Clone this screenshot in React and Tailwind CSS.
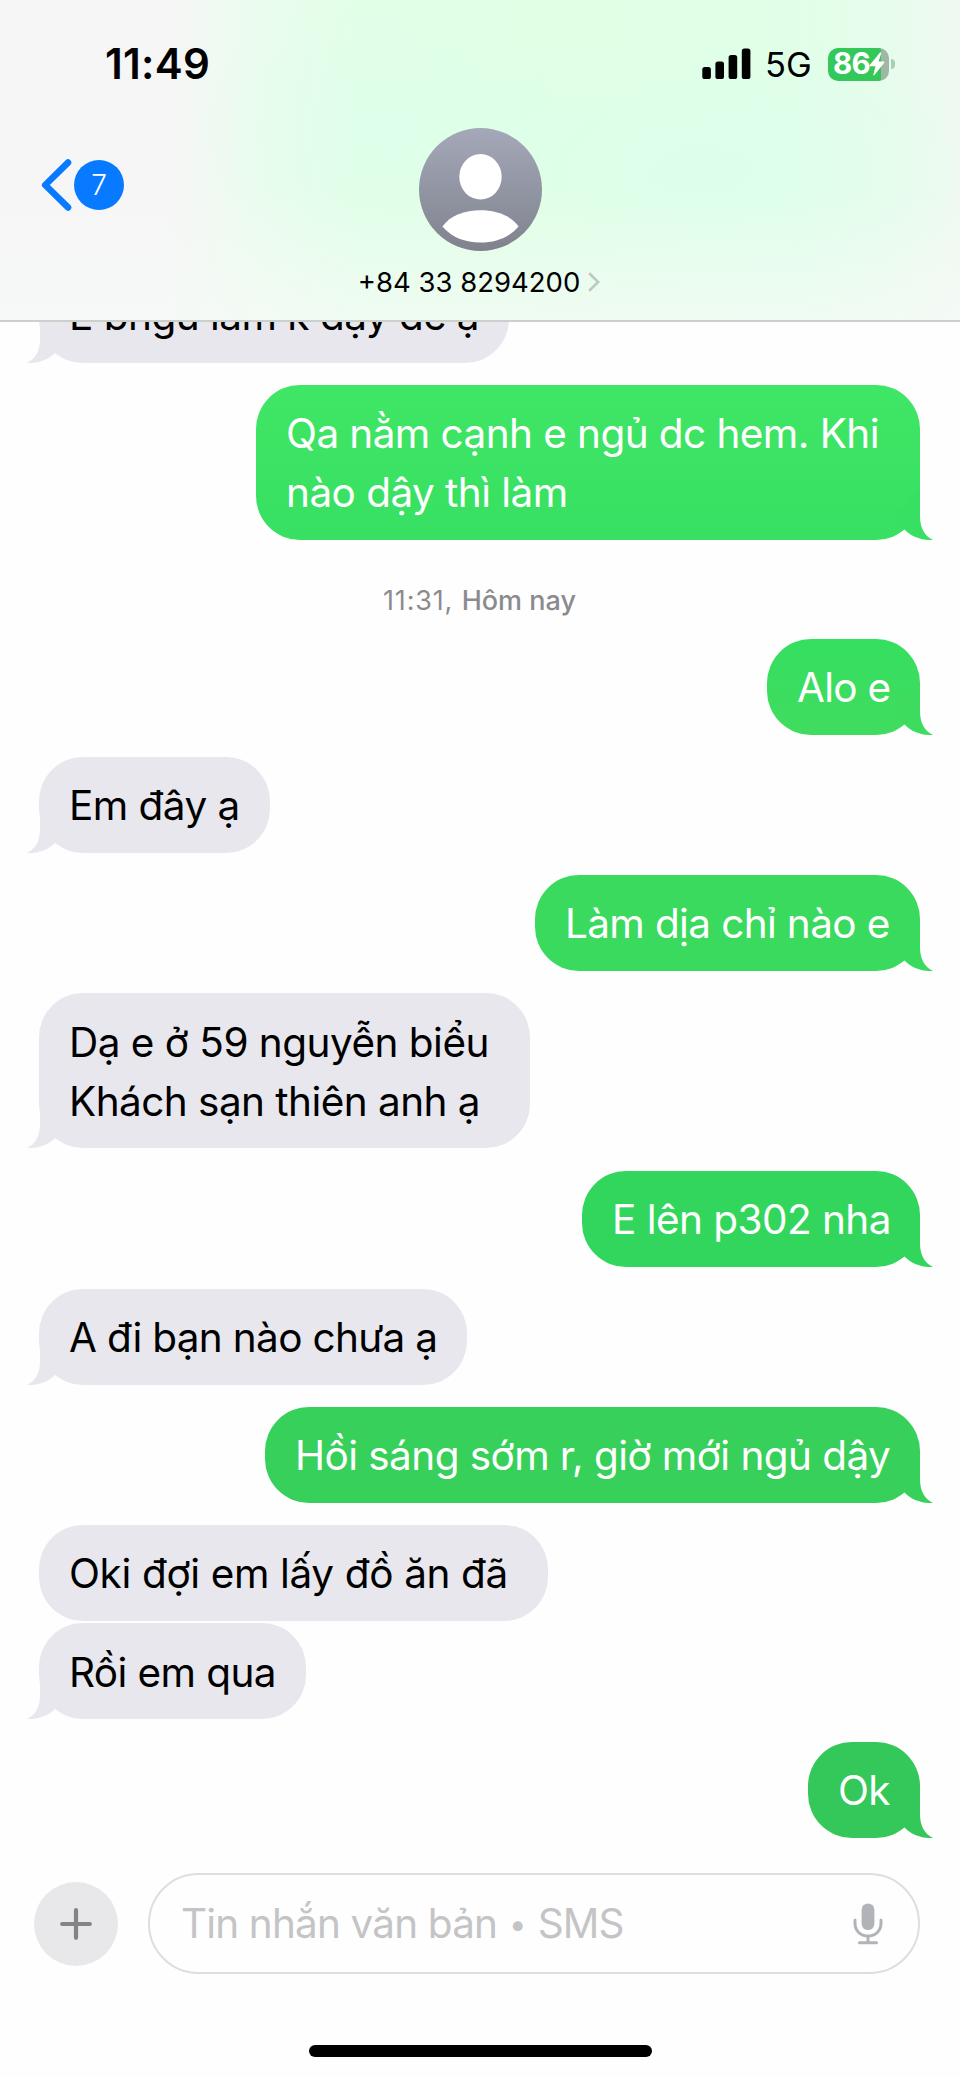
import React from 'react';
import clsx from 'clsx';

const messages = [
  { id: 1, from: 'them', lines: [{ text: 'E bhgủ làm k dậy dc ạ', spacing: 'tracking-[-0.52px]' }], size: 'w-[470px]', tail: true, first: true },
  {
    id: 2,
    from: 'me',
    lines: [
      { text: 'Qa nằm cạnh e ngủ dc hem. Khi', spacing: 'tracking-[-0.58px]' },
      { text: 'nào dậy thì làm', spacing: 'tracking-[-0.55px]' },
    ],
    size: 'w-[664px]',
    color: 'bg-gradient-to-b from-[#40e665] to-[#37e063]',
    tailColor: 'text-[#37e063]',
    tail: true,
  },
  { id: 3, stamp: true, time: '11:31,', day: 'Hôm nay' },
  { id: 4, from: 'me', lines: [{ text: 'Alo e', spacing: 'tracking-[-0.75px]' }], size: 'w-[153px]', color: 'bg-gradient-to-b from-[#35df60] to-[#40dc5f]', tailColor: 'text-[#3ddc5f]', tail: true },
  { id: 5, from: 'them', lines: [{ text: 'Em đây ạ', spacing: 'tracking-[-0.55px]' }], size: 'w-[231px]', tail: true },
  { id: 6, from: 'me', lines: [{ text: 'Làm dịa chỉ nào e', spacing: 'tracking-[-0.64px]' }], size: 'w-[385px]', color: 'bg-[#3ada5e]', tailColor: 'text-[#3ada5e]', tail: true },
  {
    id: 7,
    from: 'them',
    lines: [
      { text: 'Dạ e ở 59 nguyễn biểu', spacing: 'tracking-[-0.52px]' },
      { text: 'Khách sạn thiên anh ạ', spacing: 'tracking-[-0.55px]' },
    ],
    size: 'w-[491px]',
    tail: true,
  },
  { id: 8, from: 'me', lines: [{ text: 'E lên p302 nha', spacing: 'tracking-[-0.55px]' }], size: 'w-[338px]', color: 'bg-[#33d65c]', tailColor: 'text-[#33d65c]', tail: true },
  { id: 9, from: 'them', lines: [{ text: 'A đi bạn nào chưa ạ', spacing: 'tracking-[-0.68px]' }], size: 'w-[428px]', tail: true },
  { id: 10, from: 'me', lines: [{ text: 'Hồi sáng sớm r, giờ mới ngủ dậy', spacing: 'tracking-[-0.57px]' }], size: 'w-[655px]', color: 'bg-[#37d05a]', tailColor: 'text-[#37d05a]', tail: true },
  { id: 11, from: 'them', lines: [{ text: 'Oki đợi em lấy đồ ăn đã', spacing: 'tracking-[-0.36px]' }], size: 'w-[509px]' },
  { id: 12, from: 'them', lines: [{ text: 'Rồi em qua', spacing: 'tracking-[-0.6px]' }], size: 'w-[267px]', tail: true, grouped: true },
  { id: 13, from: 'me', lines: [{ text: 'Ok', spacing: 'tracking-[-0.8px]' }], size: 'w-[112px]', color: 'bg-[#34c759]', tailColor: 'text-[#34c759]', tail: true },
];

function StatusBar() {
  return (
    <div className="flex h-32 items-center justify-between pl-[105px] pr-[65px]">
      <span className="text-[42px] font-semibold leading-none tracking-[0.3px]">11:49</span>
      <div className="flex items-center">
        <svg width="49" height="32" viewBox="0 0 49 32" fill="currentColor">
          <rect x="0.3" y="19" width="8.6" height="12" rx="2.6" />
          <rect x="13.4" y="13.4" width="8.6" height="17.6" rx="2.6" />
          <rect x="26.6" y="7" width="8.6" height="24" rx="2.6" />
          <rect x="39.8" y="0.4" width="8.6" height="30.6" rx="2.6" />
        </svg>
        <span className="ml-[14px] mt-[2px] w-[47px] text-[34.5px] leading-none">5G</span>
        <div className="ml-[16px] flex items-center gap-[2px]">
          <div className="flex h-[33px] w-[61px] items-center rounded-[10px] bg-gradient-to-r from-[#34c759] from-[87%] to-[#9fb8a5] to-[87%] pl-[5px] text-white">
            <span className="w-[36px] whitespace-nowrap text-[29.5px] font-bold leading-none tracking-[-0.6px]">86</span>
            <svg width="16" height="24" viewBox="0 0 16 24" fill="currentColor">
              <path d="M11 0.5 0.6 13.2c-.3.5-.1 1 .5 1h5.4L4.4 22.6c-.2.9.5 1.2 1.1.5L15.4 10.6c.4-.5.1-1-.5-1H9.6L12.2 1.2c.2-.8-.7-1.3-1.2-.7Z" />
            </svg>
          </div>
          <span className="h-[10px] w-[4px] rounded-r-full bg-[#a9cdb5]"></span>
        </div>
      </div>
    </div>
  );
}

function Header() {
  return (
    <header className="h-[322px] shrink-0 border-b-2 border-[#ccd0cd] bg-[#f6f6f6] bg-[linear-gradient(to_bottom,transparent_60%,rgba(246,250,247,0.7)_100%),radial-gradient(ellipse_200px_150px_at_400px_130px,rgba(218,255,236,0.5),transparent),radial-gradient(ellipse_300px_150px_at_700px_170px,rgba(218,255,238,0.5),transparent),linear-gradient(to_right,#f6f6f6_0%,#f6f6f6_17%,#ebfcee_27%,#e1ffe7_38%,#e0ffe5_60%,#e0ffe8_82%,#e8fcec_93%,#f0f9f1_100%)]">
      <StatusBar />
      <div className="grid grid-cols-3 items-start">
        <button className="flex h-[114px] items-center pl-[40px]">
          <svg width="34" height="54" viewBox="0 0 34 54" fill="none" stroke="#087aff" strokeWidth="6.6" strokeLinecap="round" strokeLinejoin="round">
            <path d="M28 4.6 5.2 27 28 49.4" />
          </svg>
          <span className="flex h-[50px] w-[50px] items-center justify-center rounded-full bg-[#087aff] text-[28px] font-light leading-none text-white">7</span>
        </button>
        <div className="flex flex-col items-center">
          <svg width="123" height="123" viewBox="0 0 123 123">
            <defs>
              <linearGradient id="avatar" x1="0" y1="0" x2="0" y2="1">
                <stop offset="0" stopColor="#a4a8b8" />
                <stop offset="1" stopColor="#80838e" />
              </linearGradient>
            </defs>
            <circle cx="61.5" cy="61.5" r="61.5" fill="url(#avatar)" />
            <ellipse cx="61.5" cy="48.8" rx="21.2" ry="22.8" fill="#fff" />
            <path d="M23.4 98.5C31 87.5 46 82.2 61.5 82.2S92 87.5 99.6 98.5C90 109.5 77 114.5 61.5 114.5S33 109.5 23.4 98.5Z" fill="#fff" />
          </svg>
          <div className="mt-[14px] mr-[2px] flex items-center gap-[8px] whitespace-nowrap">
            <span className="text-[27.5px] leading-[34px]">+84 33 8294200</span>
            <svg width="12" height="20" viewBox="0 0 12 20" fill="none" stroke="#bcc8c0" strokeWidth="2.6">
              <path d="m1.2 1.2 9 8.8-9 8.8" />
            </svg>
          </div>
        </div>
      </div>
    </header>
  );
}

// The little hook on the bottom corner of the last bubble in a group
function Tail({ mine, className }) {
  return (
    <svg
      width="44"
      height="52"
      viewBox="0 0 44 52"
      fill="currentColor"
      className={clsx('absolute bottom-0', mine ? '-right-[13px]' : '-left-[12px] -scale-x-100', className)}
    >
      <path d="M31 0V28C31 40 35.5 48 44 52C34 52.5 23.5 49.5 16 42L4 30Z" />
    </svg>
  );
}

function Bubble({ message }) {
  const mine = message.from === 'me';

  return (
    <div
      className={clsx(
        'flex',
        mine ? 'justify-end' : 'justify-start',
        message.first ? '-mt-[55px]' : message.grouped ? 'mt-[2.4px]' : 'mt-[22.2px]'
      )}
    >
      <div
        className={clsx(
          'relative rounded-[44px] px-[30px] pt-[19.3px] pb-[17.7px]',
          message.size,
          mine ? 'text-white' : 'bg-[#e8e7ed] text-black',
          message.color
        )}
      >
        {message.tail && <Tail mine={mine} className={mine ? message.tailColor : 'text-[#e8e7ed]'} />}
        {message.lines.map((line) => (
          <p key={line.text} className={clsx('relative whitespace-nowrap text-[40.5px] leading-[59px]', line.spacing)}>
            {line.text}
          </p>
        ))}
      </div>
    </div>
  );
}

function Composer() {
  return (
    <footer className="flex items-center gap-[30px] pl-[34px] pr-[40px]">
      <button className="flex h-[84px] w-[84px] items-center justify-center rounded-full bg-[#e8e8ea]">
        <svg width="32" height="32" viewBox="0 0 32 32" stroke="#828287" strokeWidth="4.2" strokeLinecap="round">
          <path d="M16 2.2v27.6M2.2 16h27.6" />
        </svg>
      </button>
      <div className="flex h-[101px] flex-1 items-center justify-between rounded-full border-2 border-[#dedede] pl-[31px] pr-[35px]">
        <div className="mt-[2px] flex items-center whitespace-nowrap text-[40.5px] tracking-[-0.85px] text-[#c4c4c6]">
          <span>Tin nhắn văn bản</span>
          <span className="mx-[12px] text-[31px]">•</span>
          <span>SMS</span>
        </div>
        <svg width="30" height="42" viewBox="0 0 30 42" fill="none" stroke="#b1b3b8" strokeWidth="3" strokeLinecap="round">
          <rect x="8.6" y="0.5" width="12.8" height="26.5" rx="6.4" fill="#b1b3b8" stroke="none" />
          <path d="M2 17v3c0 8 5.5 13 13 13s13-5 13-13v-3M15 33v6.5M6.5 39.8h17" />
        </svg>
      </div>
    </footer>
  );
}

export default function App() {
  return (
    <div className="flex h-[2077px] w-[960px] flex-col overflow-hidden bg-[#fefefe] font-['Inter','Liberation_Sans',sans-serif] text-black">
      <Header />
      <main className="flex h-[1551px] shrink-0 flex-col overflow-hidden pl-[39px] pr-[40px]">
        {messages.map((message) =>
          message.stamp ? (
            <p key={message.id} className="mt-[43.5px] -mb-[1px] text-center text-[27px] leading-[34px] text-[#8b8b8f]">
              <span className="mr-[1px] tracking-[0.8px]">{message.time}</span> <span className="font-medium">{message.day}</span>
            </p>
          ) : (
            <Bubble key={message.id} message={message} />
          )
        )}
      </main>
      <Composer />
      <div className="mx-auto mt-[71px] h-[12px] w-[343px] rounded-full bg-black"></div>
    </div>
  );
}
